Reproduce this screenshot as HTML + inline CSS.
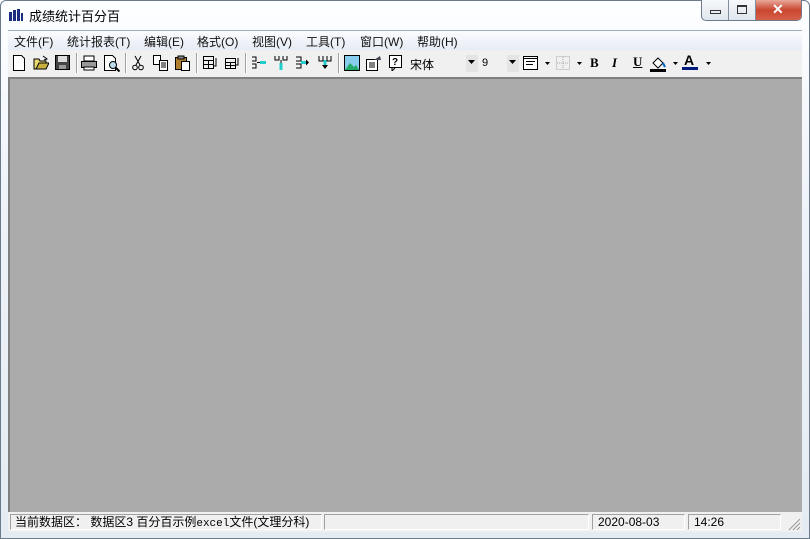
<!DOCTYPE html><html><head><meta charset="utf-8"><style>
*{margin:0;padding:0;box-sizing:border-box}
body{width:810px;height:539px;overflow:hidden;background:#fff;font-family:"Liberation Sans","Noto Sans CJK SC",sans-serif;font-size:12px;position:relative}
.frame{position:absolute;left:0;top:0;width:810px;height:539px;border:1px solid #6b7b8c;border-radius:6px 6px 0 0;background:linear-gradient(180deg,#fdfeff 0%,#eef3f9 40%,#e4ebf3 100%)}
.a{position:absolute}
.menu{left:8px;top:30px;width:794px;height:20px;background:linear-gradient(#fbfcfe,#e6ecf5);border-top:1px solid #a0acbb}
.menu span{position:absolute;top:2px;font-size:12px;color:#111}
.tb{left:8px;top:50px;width:794px;height:27px;background:#f0f0f0}
.sep{position:absolute;top:3px;width:2px;height:20px;border-left:1px solid #a0a0a0;border-right:1px solid #fff}
.ic{position:absolute;top:5px}
.gray{left:8px;top:77px;width:794px;height:435px;background:#ababab;border-top:2px solid #808080;border-left:2px solid #808080}
.st{left:8px;top:512px;width:794px;height:20px;background:#f0f0f0}
.pn{position:absolute;top:2px;height:16px;border:1px solid;border-color:#a0a0a0 #fff #fff #a0a0a0;font-size:12px;padding-left:4px;line-height:14px;white-space:nowrap}
</style></head><body>
<div class="frame"></div>
<svg class="a" style="left:9px;top:9px" width="14" height="12"><rect x="0" y="3" width="3" height="9" fill="#1a2d80"/><rect x="4" y="1" width="3" height="11" fill="#1a2d80"/><rect x="8" y="0" width="3" height="12" fill="#1a2d80"/><rect x="12" y="4" width="2" height="8" fill="#1a2d80"/></svg>
<div class="a" style="left:29px;top:6px;font-size:13px">成绩统计百分百</div>
<div class="a" style="left:701px;top:0;width:101px;height:21px;border:1px solid #707a88;border-top:none;border-radius:0 0 5px 5px;background:linear-gradient(#f6f8fb,#dfe6ee);overflow:hidden">
<div class="a" style="left:26px;top:0;width:1px;height:20px;background:#8090a0"></div>
<div class="a" style="left:53px;top:0;width:1px;height:20px;background:#8090a0"></div>
<div class="a" style="left:54px;top:0;width:47px;height:20px;background:linear-gradient(#e9a99a,#c9462f 50%,#d6604a)"></div>
<div class="a" style="left:8px;top:10px;width:11px;height:4px;border:1px solid #333"></div>
<div class="a" style="left:35px;top:5px;width:10px;height:9px;border:1px solid #333;border-top-width:2px"></div>
<div class="a" style="left:70px;top:1px;color:#fff;font-weight:bold;font-size:14px">✕</div>
</div>
<div class="a menu">
<span style="left:6px">文件(F)</span><span style="left:59px">统计报表(T)</span><span style="left:136px">编辑(E)</span><span style="left:189px">格式(O)</span><span style="left:244px">视图(V)</span><span style="left:298px">工具(T)</span><span style="left:352px">窗口(W)</span><span style="left:409px">帮助(H)</span>
</div>
<div class="a tb">
<svg class="ic" style="left:4px" width="14" height="16"><path d="M1.5 .5h8l3 3v12h-11z" fill="#fff" stroke="#000"/></svg>
<svg class="ic" style="left:25px" width="16" height="16"><path d="M1 4h5l1 2h6v8H1z" fill="#e8d870" stroke="#000"/><path d="M3 14l3-6h10l-3 6z" fill="#c8b040" stroke="#000"/><path d="M10 1l4 3-3 1" fill="none" stroke="#000"/></svg>
<svg class="ic" style="left:47px" width="16" height="16"><rect x=".5" y=".5" width="14" height="14" fill="#444" stroke="#000"/><rect x="3" y="1" width="9" height="6" fill="#ddd"/><rect x="4" y="10" width="7" height="4" fill="#999"/></svg>
<div class="sep" style="left:68px"></div>
<svg class="ic" style="left:73px" width="16" height="16"><rect x="3" y="1" width="10" height="5" fill="#fff" stroke="#000"/><rect x=".5" y="6.5" width="15" height="6" fill="#999" stroke="#000"/><rect x="3" y="12" width="10" height="3" fill="#fff" stroke="#000"/></svg>
<svg class="ic" style="left:95px" width="17" height="17"><path d="M1.5 .5h8l3 3v12h-11z" fill="#fff" stroke="#000"/><circle cx="10" cy="10" r="3.5" fill="#bde" stroke="#000"/><path d="M12.5 12.5l4 4" stroke="#000" stroke-width="2"/></svg>
<div class="sep" style="left:117px"></div>
<svg class="ic" style="left:124px" width="12" height="16"><path d="M3 1l5 9M9 1L4 10" stroke="#000"/><circle cx="3" cy="12.5" r="2.3" fill="none" stroke="#000"/><circle cx="9" cy="12.5" r="2.3" fill="none" stroke="#000"/></svg>
<svg class="ic" style="left:145px" width="16" height="16"><path d="M.5 .5h7v9h-7z" fill="#fff" stroke="#000"/><path d="M6.5 5.5h8v10h-8z" fill="#fff" stroke="#000"/><path d="M8 8h5M8 10h5M8 12h5" stroke="#000"/></svg>
<svg class="ic" style="left:167px" width="16" height="16"><rect x=".5" y="2.5" width="11" height="12" fill="#b08030" stroke="#000"/><rect x="3" y="1" width="6" height="3" fill="#888" stroke="#000"/><path d="M6.5 6.5h8v9h-8z" fill="#fff" stroke="#000"/></svg>
<div class="sep" style="left:188px"></div>
<svg class="ic" style="left:195px" width="16" height="16"><path d="M.5 1.5h10v12h-10zM.5 5.5h10M.5 9.5h10M5.5 5.5v8M13 3v8h-2" fill="none" stroke="#000"/></svg>
<svg class="ic" style="left:217px" width="16" height="16"><path d="M.5 3.5h10v10h-10zM.5 7.5h10M.5 10.5h10M5.5 7.5v6M13 3v7h-2" fill="none" stroke="#000"/></svg>
<div class="sep" style="left:237px"></div>
<svg class="ic" style="left:243px" width="16" height="16"><path d="M1 2h4v4H1M1 9h4v4H1" fill="none" stroke="#000"/><rect x="9" y="6" width="6" height="3" fill="#2cc"/><path d="M6 7.5h3" stroke="#000"/></svg>
<svg class="ic" style="left:265px" width="16" height="16"><path d="M2 1v4h4V1M10 1v4h4V1" fill="none" stroke="#000"/><rect x="6.5" y="8" width="3" height="7" fill="#2cc"/><path d="M8 5v3" stroke="#000"/></svg>
<svg class="ic" style="left:287px" width="16" height="16"><path d="M1 2h5v4H1M1 9h5v4H1" fill="none" stroke="#000"/><rect x="6" y="6" width="5" height="3" fill="#2cc"/><path d="M11 4.5l3 3-3 3z" fill="#000"/></svg>
<svg class="ic" style="left:309px" width="16" height="16"><path d="M2 1v5h4V1M10 1v5h4V1" fill="none" stroke="#000"/><rect x="6.5" y="5" width="3" height="5" fill="#2cc"/><path d="M5 10h6l-3 4z" fill="#000"/></svg>
<div class="sep" style="left:330px"></div>
<svg class="ic" style="left:336px" width="16" height="16"><rect x=".5" y=".5" width="15" height="15" fill="#8ce" stroke="#000"/><path d="M1 15l5-7 4 4 2-2 3 5z" fill="#2a6"/></svg>
<svg class="ic" style="left:358px" width="16" height="16"><rect x=".5" y="4.5" width="11" height="11" fill="#fff" stroke="#000"/><path d="M3 8h6M3 10h6M3 12h6" stroke="#000"/><path d="M8 5l6-4 1 4z" fill="#445"/></svg>
<svg class="ic" style="left:380px" width="16" height="16"><rect x="1.5" y=".5" width="12" height="12" fill="#fff" stroke="#000"/><path d="M4 13v3l3-3" fill="none" stroke="#000"/><text x="4" y="10" font-size="10" font-weight="bold" font-family="Liberation Sans">?</text></svg>
<div class="a" style="left:402px;top:6px;font-size:12px">宋体</div>
<div class="a" style="left:458px;top:5px;width:12px;height:17px;background:#e4e4e4"></div>
<svg class="a" style="left:460px;top:10px" width="8" height="5"><path d="M0 0h7l-3.5 4z"/></svg>
<div class="a" style="left:474px;top:7px;font-size:11px">9</div>
<div class="a" style="left:499px;top:5px;width:12px;height:17px;background:#e4e4e4"></div>
<svg class="a" style="left:501px;top:10px" width="8" height="5"><path d="M0 0h7l-3.5 4z"/></svg>
<svg class="ic" style="left:515px" width="16" height="16"><rect x=".5" y="1.5" width="14" height="13" fill="#fff" stroke="#000"/><path d="M1 3.5h13M3 6.5h9M3 9.5h7" stroke="#000"/></svg>
<svg class="a" style="left:537px;top:12px" width="5" height="3"><path d="M0 0h5l-2.5 3z"/></svg>
<svg class="ic" style="left:548px" width="16" height="16"><rect x=".5" y="1.5" width="13" height="13" fill="none" stroke="#aaa" stroke-dasharray="1 1"/><path d="M7 2v12M1 8h12" stroke="#aaa" stroke-dasharray="1 1"/></svg>
<svg class="a" style="left:569px;top:12px" width="5" height="3"><path d="M0 0h5l-2.5 3z"/></svg>
<div class="a" style="left:582px;top:5px;font:bold 13px 'Liberation Serif',serif">B</div>
<div class="a" style="left:604px;top:5px;font:italic bold 13px 'Liberation Serif',serif">I</div>
<div class="a" style="left:625px;top:4px;font:bold 13px 'Liberation Serif',serif;text-decoration:underline">U</div>
<svg class="ic" style="left:642px" width="18" height="18"><path d="M3 8l5-5 5 5-5 5z" fill="#fff" stroke="#000"/><path d="M13 8l2 4" stroke="#06c" stroke-width="2"/><rect x="0" y="14" width="16" height="3" fill="#000"/></svg>
<svg class="a" style="left:665px;top:12px" width="5" height="3"><path d="M0 0h5l-2.5 3z"/></svg>
<div class="a" style="left:676px;top:2px;font:bold 14px 'Liberation Sans',sans-serif;color:#000">A</div>
<div class="a" style="left:674px;top:17px;width:16px;height:3px;background:#001a80"></div>
<svg class="a" style="left:698px;top:12px" width="5" height="3"><path d="M0 0h5l-2.5 3z"/></svg>
</div>
<div class="a gray"></div>
<div class="a st">
<div class="pn" style="left:2px;width:312px">当前数据区：&nbsp;数据区3 百分百示例<span style="font-family:'Liberation Mono',monospace;font-size:11px">excel</span>文件(文理分科)</div>
<div class="pn" style="left:316px;width:265px"></div>
<div class="pn" style="left:584px;width:93px;padding-left:5px">2020-08-03</div>
<div class="pn" style="left:680px;width:93px;padding-left:5px">14:26</div>
<svg class="a" style="left:780px;top:6px" width="13" height="13"><path d="M12 1L1 12M12 5L5 12M12 9L9 12" stroke="#999"/></svg>
</div>
</body></html>
